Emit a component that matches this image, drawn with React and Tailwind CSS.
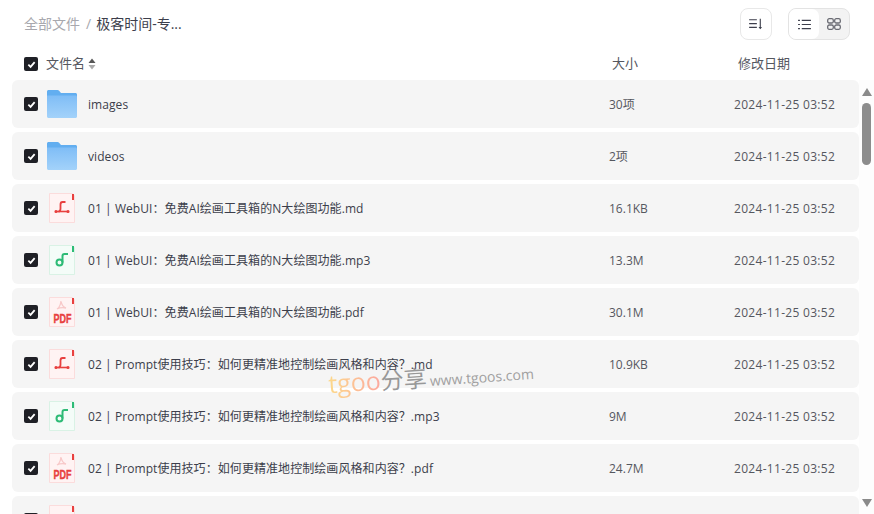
const FONT = 'font-["Open_Sans","Noto_Sans_CJK_SC",sans-serif]';

const files = [
  { name: 'images', type: 'folder', size: '30项' },
  { name: 'videos', type: 'folder', size: '2项' },
  { name: '01 | WebUI：免费AI绘画工具箱的N大绘图功能.md', type: 'md', size: '16.1KB' },
  { name: '01 | WebUI：免费AI绘画工具箱的N大绘图功能.mp3', type: 'mp3', size: '13.3M' },
  { name: '01 | WebUI：免费AI绘画工具箱的N大绘图功能.pdf', type: 'pdf', size: '30.1M' },
  { name: '02 | Prompt使用技巧：如何更精准地控制绘画风格和内容？.md', type: 'md', size: '10.9KB' },
  { name: '02 | Prompt使用技巧：如何更精准地控制绘画风格和内容？.mp3', type: 'mp3', size: '9M' },
  { name: '02 | Prompt使用技巧：如何更精准地控制绘画风格和内容？.pdf', type: 'pdf', size: '24.7M' },
  { name: '', type: 'cut', size: '', date: '' },
];

function Checkbox() {
  return (
    <span className="w-[14px] h-[14px] shrink-0 rounded-[2px] bg-[#1f2026] flex items-center justify-center">
      <svg viewBox="0 0 10 10" className="w-[9px] h-[9px]" fill="none" stroke="#fff" strokeWidth="2">
        <path d="M1.5 5.2 4 7.6 8.5 2.4" />
      </svg>
    </span>
  );
}

function FolderIcon() {
  return (
    <svg viewBox="0 0 30 28" className="w-[30px] h-[28px] shrink-0">
      <defs>
        <linearGradient id="folderFront" x1="0" y1="0" x2="0" y2="1">
          <stop offset="0" stopColor="#7fbdf6" />
          <stop offset="1" stopColor="#a3d2fa" />
        </linearGradient>
      </defs>
      <path d="M0 1.500C0 .6.700 0 1.500 0h9c.7 0 1.200.3 1.600.8L14 3h14.500c.8 0 1.500.7 1.500 1.500V12H0z" fill="#62aef0" />
      <path d="M0 5.500h28.500c.8 0 1.500.7 1.500 1.500v19.500c0 .8-.7 1.500-1.500 1.500h-27C.7 28 0 27.300 0 26.500z" fill="url(#folderFront)" />
    </svg>
  );
}

function FileIcon({ type }) {
  const mp3 = type === 'mp3';
  const edge = mp3 ? '#d9f2e5' : '#fbdcdc';
  const fill = mp3 ? '#f4fcf8' : '#fff3f3';
  const accent = mp3 ? '#2dbb76' : '#e8403f';
  return (
    <svg viewBox="0 0 26 30" className="w-[26px] h-[30px] mx-[2px] shrink-0">
      <path d="M.5.5h23l2 2v27H.5z" fill={fill} stroke={edge} />
      <rect x="23" y="1" width="2" height="6" fill={accent} />
      {type === 'md' && (
        <g fill="none" stroke={accent} strokeWidth="1.600">
          <path d="M6 18.500h14" />
          <path d="M9.500 18.500c1.500 0 2-1 2-3V11.500c0-1.500.8-2.500 2-2.500h3" strokeWidth="1.800" />
          <circle cx="7" cy="18.500" r=".8" />
          <circle cx="19" cy="18.500" r=".8" />
        </g>
      )}
      {mp3 && (
        <g fill="none" stroke={accent} strokeWidth="2">
          <circle cx="10.500" cy="17.500" r="3" />
          <path d="M13.500 17.500V11c0-1.500 1-2 2-2h3.500" />
        </g>
      )}
      {type === 'pdf' && (
        <>
          <path d="M8 12c2.500-1.500 3.500-4 4-8 .5 3.500 2 6 5 7-3-.5-6-.5-9 1z" fill="none" stroke="#f8c9c9" strokeWidth="1.300" />
          <text transform="translate(4.500 26) scale(0.95 1.3)" fontFamily="Liberation Sans, sans-serif" fontWeight="700" fontSize="9.500" fill={accent} stroke={accent} strokeWidth="0.3">PDF</text>
        </>
      )}
    </svg>
  );
}

function FileRow({ file }) {
  const date = file.date ?? '2024-11-25 03:52';
  return (
    <div className="h-12 shrink-0 rounded-[6px] bg-[#f5f5f5] flex items-center pl-3 text-[12px] text-[#3c3e4b]">
      <Checkbox />
      <span className="w-[30px] ml-[9px] flex justify-center shrink-0">
        {file.type === 'folder' ? <FolderIcon /> : <FileIcon type={file.type} />}
      </span>
      <span className="ml-[11px] w-[521px] shrink-0 truncate pt-px tracking-[0.07px]">{file.name}</span>
      <span className="w-[125px] shrink-0 text-[#55575f] pt-px">{file.size}</span>
      <span className="text-[#55575f] tracking-[0.3px] pt-px">{date}</span>
    </div>
  );
}

function Watermark() {
  return (
    <div className="absolute left-[328px] top-[358px] flex items-baseline -rotate-[4deg] whitespace-nowrap pointer-events-none">
      <span className="text-[25px] leading-[36px] bg-gradient-to-r from-[#fcd98a] to-[#fca79e] bg-clip-text text-transparent">tgoo</span>
      <span className="text-[23px] leading-[36px] text-[#989898]">分享</span>
      <span className="ml-[3px] text-[14px] text-[#a0a0a0]">www.tgoos.com</span>
    </div>
  );
}

export default function App() {
  return (
    <div className={`relative h-[514px] w-[874px] overflow-hidden bg-white flex flex-col ${FONT}`}>
      {/* Top bar */}
      <div className="h-12 mb-1 shrink-0 flex items-center pl-6 pr-6 text-[14px]">
        <span className="text-[#a8a8ae] pb-[2px]">全部文件</span>
        <span className="ml-[6px] mr-[5px] text-[#a8a8ae] pb-[2px]">/</span>
        <span className="text-[#3c3e4b] pb-[2px]">极客时间-专...</span>
        <div className="ml-auto flex items-center gap-4">
          <button className="w-8 h-8 rounded-[8px] border border-[#e8e8e8] flex items-center justify-center">
            <svg viewBox="0 0 16 14" className="w-[14px] h-[12px]" fill="none" stroke="#3c3e4b" strokeWidth="1.300">
              <path d="M0 2h9M0 6.500h9M0 11h9M13 1v11" />
              <path d="M11 10.500h4L13 13z" fill="#3c3e4b" stroke="none" />
            </svg>
          </button>
          <div className="h-8 w-[62px] rounded-[8px] border border-[#e3e3e3] bg-[#f3f3f3] flex">
            <span className="w-[30px] rounded-[7px] bg-white flex items-center justify-center">
              <svg viewBox="0 0 14 12" className="w-[13px] h-[11px]" fill="none" stroke="#3c3e4b" strokeWidth="1.200">
                <path d="M0 1.500h2M4 1.500h10M0 6h2M4 6h10M0 10.500h2M4 10.500h10" />
              </svg>
            </span>
            <span className="flex-1 flex items-center justify-center">
              <svg viewBox="0 0 14 12" className="w-[14px] h-[12px]" fill="none" stroke="#6a6b73" strokeWidth="1.300">
                <rect x=".7" y=".7" width="5.600" height="4.300" rx="1.500" />
                <rect x="7.700" y=".7" width="5.600" height="4.300" rx="1.500" />
                <rect x=".7" y="7" width="5.600" height="4.300" rx="1.500" />
                <rect x="7.700" y="7" width="5.600" height="4.300" rx="1.500" />
              </svg>
            </span>
          </div>
        </div>
      </div>

      {/* Column header */}
      <div className="h-6 shrink-0 flex items-center pl-6 text-[13px] text-[#55575f]">
        <Checkbox />
        <span className="ml-2">文件名</span>
        <svg viewBox="0 0 8 12" className="w-2 h-3 ml-[3px]">
          <path d="M4 .5 7.500 5H.5z" fill="#555" />
          <path d="M4 11.500 7.500 7H.5z" fill="#aaa" />
        </svg>
        <span className="ml-[516px] w-[126px] shrink-0">大小</span>
        <span>修改日期</span>
      </div>

      {/* List */}
      <div className="flex flex-1 mt-1 min-h-0">
        <div className="w-[859px] shrink-0 pl-3 flex flex-col gap-1 overflow-hidden">
          {files.map((file, i) => (
            <FileRow key={i} file={file} />
          ))}
        </div>
        <div className="flex-1 bg-[#fdfdfd] flex flex-col items-center pt-2 pb-[7px]">
          <svg viewBox="0 0 10 8" className="w-[10px] h-2"><path d="M5 0l5 8H0z" fill="#8a8a8a" /></svg>
          <div className="mt-[7px] w-[9px] h-[62px] rounded-full bg-[#8c8c8c]" />
          <svg viewBox="0 0 10 8" className="w-[10px] h-2 mt-auto"><path d="M5 8 10 0H0z" fill="#8a8a8a" /></svg>
        </div>
      </div>

      <Watermark />
    </div>
  );
}
